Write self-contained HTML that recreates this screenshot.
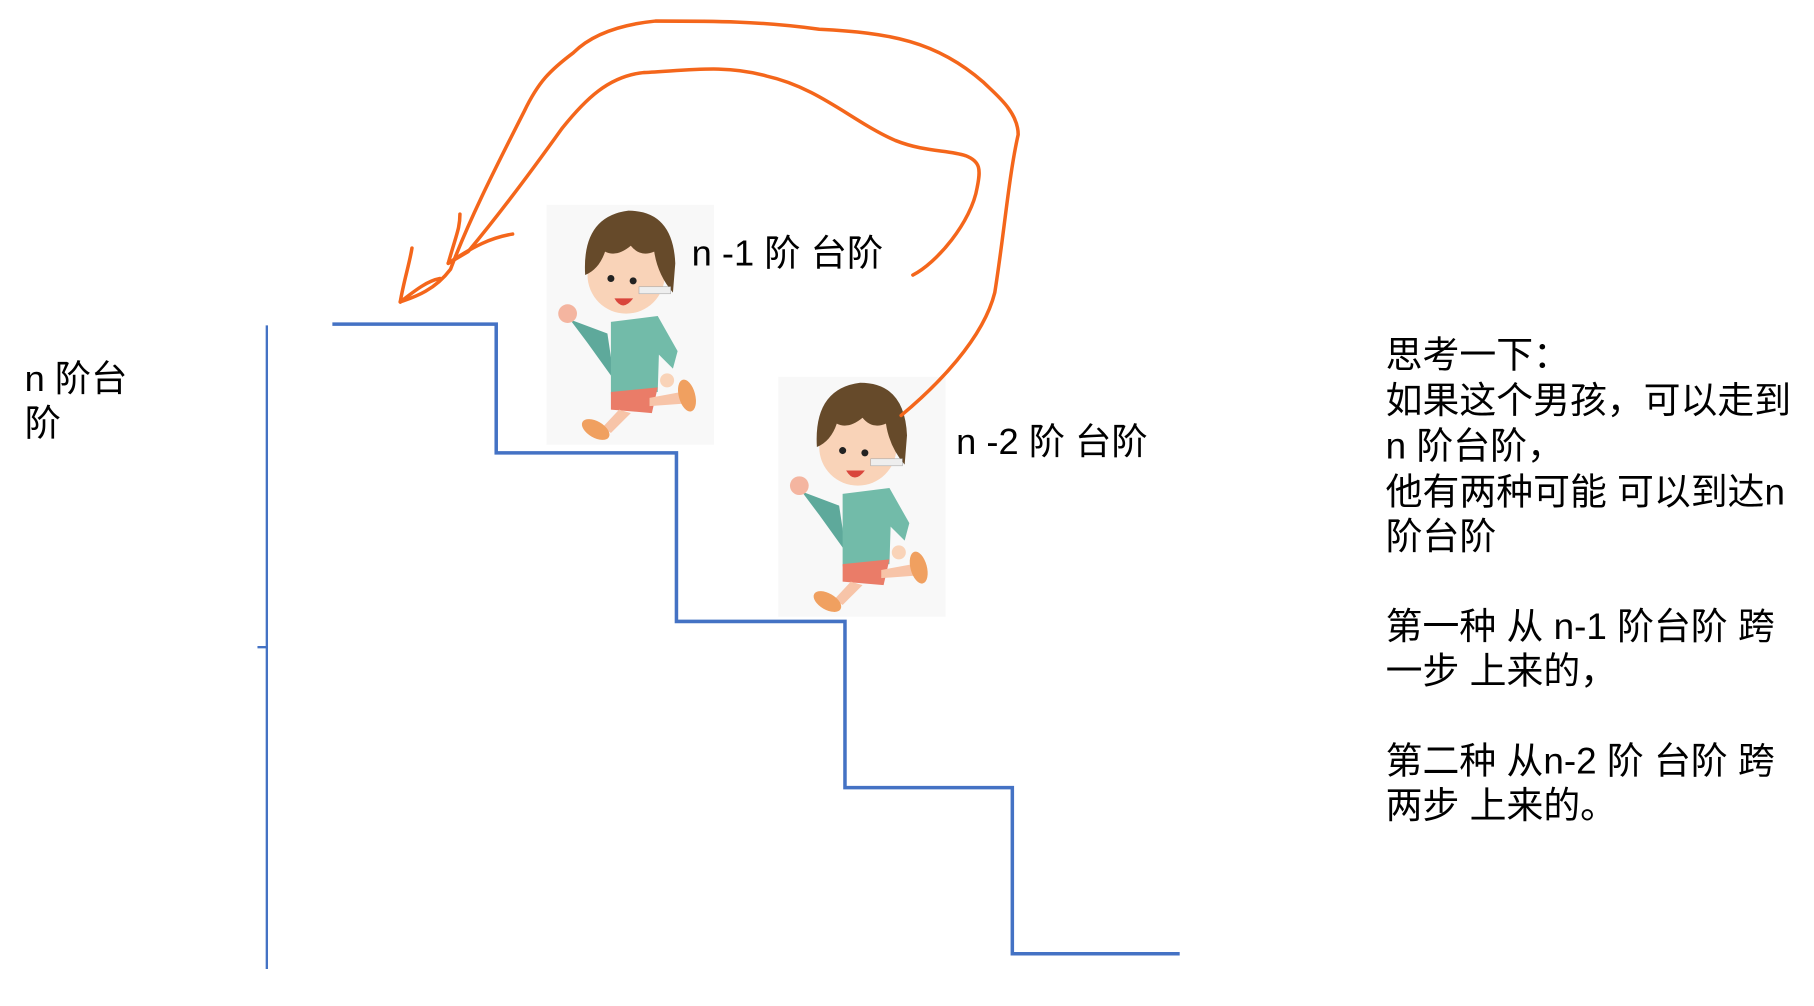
<!DOCTYPE html>
<html><head><meta charset="utf-8"><style>
html,body{margin:0;padding:0;background:#fff;width:1814px;height:1006px;overflow:hidden}
svg{display:block}
text{font-family:"Liberation Sans","Noto Sans CJK SC",sans-serif;fill:#000}
</style></head><body>
<svg width="1814" height="1006" viewBox="0 0 1550 859.6" preserveAspectRatio="none">
<defs>
<g id="boy">
<rect x="0" y="0" width="143" height="205" fill="#f8f8f8"/>
<path d="M20 98 L52 110 L58 150 L35 118 Z" fill="#5ea99b"/>
<circle cx="18" cy="93" r="8" fill="#f4b5a0"/>
<path d="M55 100 L95 95 L112 125 L108 140 L96 128 L95 160 L55 162 Z" fill="#72bba9"/>
<path d="M55 160 L95 156 L90 178 L55 175 Z" fill="#ea7c68"/>
<path d="M62 175 L48 190 L55 195 L72 178 Z" fill="#f7c4a8"/>
<path d="M88 165 L115 160 L116 170 L88 172 Z" fill="#f7c4a8"/>
<ellipse cx="42" cy="192" rx="13" ry="7" transform="rotate(30 42 192)" fill="#f0a060"/>
<ellipse cx="120" cy="163" rx="7" ry="14" transform="rotate(-15 120 163)" fill="#f0a060"/>
<circle cx="103" cy="150" r="6" fill="#f9d3b8"/>
<circle cx="68" cy="60" r="33" fill="#f9d3b8"/>
<path d="M33 60 Q30 10 70 5 Q108 5 110 50 L108 75 Q95 60 92 40 Q80 45 72 35 Q60 45 50 40 Q45 55 33 60 Z" fill="#664a2a"/>
<circle cx="55" cy="63" r="3" fill="#222"/><circle cx="74" cy="65" r="3" fill="#222"/>
<path d="M58 80 Q65 92 74 80 Z" fill="#d9463c"/>
<rect x="79" y="70" width="27" height="6" fill="#eee" stroke="#aaa" stroke-width="0.5"/>
</g>
</defs>
<use href="#boy" x="467" y="175"/>
<use href="#boy" x="665" y="322"/>
<g fill="none" stroke="#4472c4">
<path d="M228 278 V828" stroke-width="2"/>
<path d="M220 553 H228" stroke-width="2"/>
<path d="M284 277 H424 V387 H578 V531 H722 V673 H865 V815 H1008" stroke-width="3"/>
</g>
<g fill="none" stroke="#f4661b" stroke-width="3" stroke-linecap="round" stroke-linejoin="round">
<path d="M770 355 C800 330 840 290 850 250 C858 200 862 150 870 115 C870 95 850 80 840 70 C800 35 760 28 700 25 C650 18 610 18 560 18 C520 22 500 35 490 45 C470 60 460 70 448 95 C420 150 400 190 385 230 C370 250 350 255 342 258"/>
<path d="M342 258 C345 240 350 225 352 212"/>
<path d="M342 258 C355 248 365 240 376 238"/>
<path d="M780 235 C800 225 830 190 835 160 C838 145 838 138 825 133 C810 128 790 130 765 120 C730 105 700 75 655 65 C620 55 590 60 550 62 C520 65 500 85 480 110 C455 145 425 185 400 215 L383 225"/>
<path d="M383 225 C390 200 393 195 393 183"/>
<path d="M383 225 C405 210 420 203 438 200"/>
</g>
<g font-size="31">
<text x="591" y="227">n -1 阶 台阶</text>
<text x="817" y="388">n -2 阶 台阶</text>
<text x="21" y="334">n 阶台</text>
<text x="21" y="372">阶</text>
</g>
<g font-size="31.5">
<text x="1184" y="314">思考一下：</text>
<text x="1184" y="353">如果这个男孩，可以走到</text>
<text x="1184" y="392">n 阶台阶，</text>
<text x="1184" y="431">他有两种可能 可以到达n</text>
<text x="1184" y="469">阶台阶</text>
<text x="1184" y="546">第一种 从 n-1 阶台阶 跨</text>
<text x="1184" y="584">一步  上来的，</text>
<text x="1184" y="661">第二种 从n-2 阶 台阶 跨</text>
<text x="1184" y="699">两步 上来的。</text>
</g>
</svg>
</body></html>
